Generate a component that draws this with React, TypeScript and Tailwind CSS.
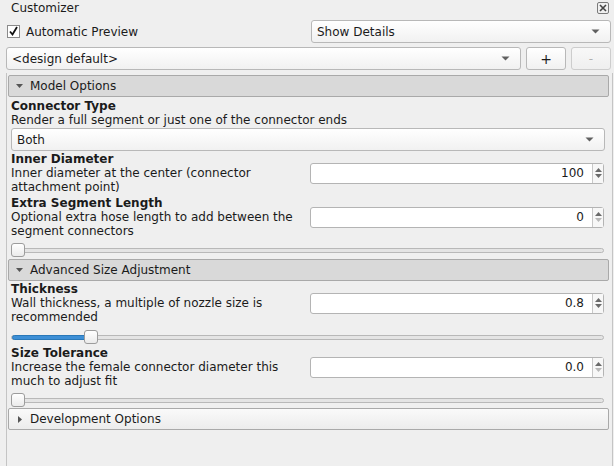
import React from "react";

const Arrow = ({ color = "#555" }: { color?: string }) => (
  <svg width="9" height="5" viewBox="0 0 9 5">
    <path d="M0.5 0.5h8L4.5 4.5z" fill={color} />
  </svg>
);

const Combo = ({ text, className = "" }: { text: string; className?: string }) => (
  <div
    className={`flex h-[23px] items-center rounded-[3px] border border-[#b8b8b8] bg-gradient-to-b from-white to-[#f1f1f1] pl-[5px] pr-[10px] ${className}`}
  >
    <span className="flex-1 truncate">{text}</span>
    <Arrow color="#606060" />
  </div>
);

const Spin = ({ value, downDisabled = false }: { value: string; downDisabled?: boolean }) => (
  <div className="flex h-[21px] w-[294px] rounded-[3px] border border-[#b4b4b4] bg-white">
    <div className="flex flex-1 items-center justify-end pr-[8px]">{value}</div>
    <div className="flex w-[11px] flex-col items-center justify-center gap-[2px] border-l border-[#c8c8c8] bg-[#f7f7f7]">
      <svg width="7" height="4" viewBox="0 0 7 4">
        <path d="M0 4h7L3.5 0z" fill="#6a6a6a" />
      </svg>
      <svg width="7" height="4" viewBox="0 0 7 4">
        <path d="M0 0h7L3.5 4z" fill={downDisabled ? "#b8b8b8" : "#6a6a6a"} />
      </svg>
    </div>
  </div>
);

const Slider = ({ pos, fill = false }: { pos: number; fill?: boolean }) => (
  <div className="relative ml-[3px] mr-[5px] h-[14px]">
    <div className="absolute left-0 right-0 top-[5px] h-[5px] rounded-full border border-[#b8b8b8] bg-[#e4e4e4]" />
    {fill && (
      <div
        className="absolute left-[1px] top-[5px] h-[5px] rounded-full border border-[#2a78b8] bg-[#3d8fd6]"
        style={{ width: pos + 4 }}
      />
    )}
    <div
      className="absolute top-0 h-[14px] w-[14px] rounded-[3px] border border-[#9c9c9c] bg-gradient-to-b from-white to-[#ebebeb]"
      style={{ left: pos }}
    />
  </div>
);

const Header = ({ title, open = true, light = false }: { title: string; open?: boolean; light?: boolean }) => (
  <div
    className={`flex h-[22px] items-center rounded-[2px] border border-[#a9a9a9] pl-[6px] ${
      light ? "bg-gradient-to-b from-[#fafafa] to-[#ececec]" : "bg-[#d9d9d9]"
    }`}
  >
    {open ? (
      <svg width="7" height="4" viewBox="0 0 7 4" className="ml-[1px] mr-[7px]">
        <path d="M0 0h7L3.5 4z" fill="#555" />
      </svg>
    ) : (
      <svg width="4" height="7" viewBox="0 0 4 7" className="ml-[3px] mr-[8px]">
        <path d="M0 0v7L4 3.5z" fill="#555" />
      </svg>
    )}
    <span>{title}</span>
  </div>
);

const Param = ({
  label,
  desc,
  children,
  className = "",
}: {
  label: string;
  desc: React.ReactNode;
  children?: React.ReactNode;
  className?: string;
}) => (
  <div className={`flex items-center pl-[3px] pr-[5px] ${className}`}>
    <div className="w-[297px]">
      <div className="font-bold">{label}</div>
      <div>{desc}</div>
    </div>
    <div className="ml-auto">{children}</div>
  </div>
);

export default function App() {
  return (
    <div className="flex h-[466px] w-[614px] flex-col overflow-hidden bg-[#efefef] font-['DejaVu_Sans',sans-serif] text-[12px] leading-[14px] text-[#1b1b1b]">
      <div className="flex h-[16px] items-center pl-[11px] pr-[5px]">
        <span>Customizer</span>
        <div className="ml-auto flex h-[12px] w-[12px] items-center justify-center rounded-[2px] border border-[#7a7a7a]">
          <svg width="8" height="8" viewBox="0 0 8 8">
            <path d="M1 1l6 6M7 1l-6 6" stroke="#444" strokeWidth="1.6" />
          </svg>
        </div>
      </div>

      <div className="mt-[4px] flex h-[23px] items-center pl-[7px] pr-[3px]">
        <div className="flex h-[13px] w-[13px] items-center justify-center border border-[#8a8a8a] bg-white">
          <svg width="11" height="11" viewBox="0 0 11 11">
            <path d="M2 5.5l2.5 3L9 1" stroke="#111" strokeWidth="1.8" fill="none" />
          </svg>
        </div>
        <span className="ml-[6px]">Automatic Preview</span>
        <Combo text="Show Details" className="ml-auto w-[300px]" />
      </div>

      <div className="mt-[4px] flex h-[23px] gap-[5px] pl-[6px] pr-[3px]">
        <Combo text="<design default>" className="flex-1" />
        <div className="flex w-[40px] items-center justify-center rounded-[3px] border border-[#b8b8b8] bg-gradient-to-b from-white to-[#f1f1f1] text-[14px]">
          +
        </div>
        <div className="flex w-[40px] items-center justify-center rounded-[3px] border border-[#cdcdcd] bg-gradient-to-b from-[#f8f8f8] to-[#efefef] text-[#b0b0b0]">
          -
        </div>
      </div>

      <div className="ml-[6px] mr-[1px] mt-[3px] flex flex-1 flex-col border-l border-r border-[#c4c4c4] pl-[1px] pr-[3px] pt-[2px]">
        <Header title="Model Options" />
        <div className="mt-[2px] pl-[3px] font-bold">Connector Type</div>
        <div className="pl-[3px]">Render a full segment or just one of the connector ends</div>
        <Combo text="Both" className="ml-[3px] mr-[4px] mt-[1px]" />
        <Param
          className="mt-[1px]"
          label="Inner Diameter"
          desc={
            <>
              Inner diameter at the center (connector
              <br />
              attachment point)
            </>
          }
        >
          <Spin value="100" />
        </Param>
        <Param
          className="mt-[2px]"
          label="Extra Segment Length"
          desc={
            <>
              Optional extra hose length to add between the
              <br />
              segment connectors
            </>
          }
        >
          <Spin value="0" downDisabled />
        </Param>
        <div className="mt-[5px]">
          <Slider pos={0} />
        </div>
        <div className="mt-[2px]">
          <Header title="Advanced Size Adjustment" />
        </div>
        <Param
          className="mt-[1px]"
          label="Thickness"
          desc={
            <>
              Wall thickness, a multiple of nozzle size is
              <br />
              recommended
            </>
          }
        >
          <Spin value="0.8" />
        </Param>
        <div className="mt-[6px]">
          <Slider pos={73} fill />
        </div>
        <Param
          className="mt-[2px]"
          label="Size Tolerance"
          desc={
            <>
              Increase the female connector diameter this
              <br />
              much to adjust fit
            </>
          }
        >
          <Spin value="0.0" downDisabled />
        </Param>
        <div className="mt-[5px]">
          <Slider pos={0} />
        </div>
        <div className="mt-[1px]">
          <Header title="Development Options" open={false} light />
        </div>
      </div>
    </div>
  );
}
